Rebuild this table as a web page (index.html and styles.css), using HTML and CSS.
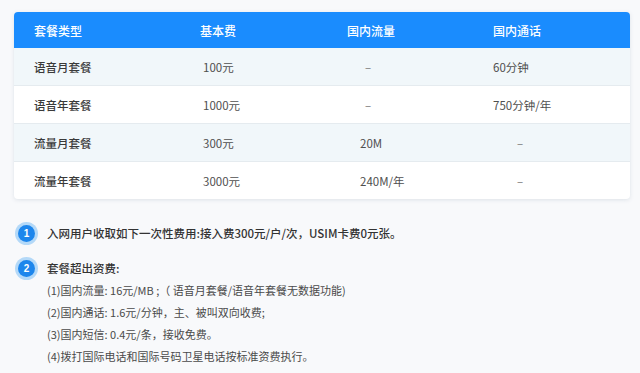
FILE: index.html
```html
<!DOCTYPE html>
<html lang="zh-CN">
<head>
<meta charset="utf-8">
<link rel="stylesheet" href="styles.css">
</head>
<body>
<div class="page">
  <div class="table">
    <div class="row head">
      <div class="cell">套餐类型</div>
      <div class="cell">基本费</div>
      <div class="cell">国内流量</div>
      <div class="cell">国内通话</div>
    </div>
    <div class="row odd">
      <div class="cell name">语音月套餐</div>
      <div class="cell c2">100元</div>
      <div class="cell c3 dash">–</div>
      <div class="cell c4">60分钟</div>
    </div>
    <div class="row">
      <div class="cell name">语音年套餐</div>
      <div class="cell c2">1000元</div>
      <div class="cell c3 dash">–</div>
      <div class="cell c4">750分钟/年</div>
    </div>
    <div class="row odd">
      <div class="cell name">流量月套餐</div>
      <div class="cell c2">300元</div>
      <div class="cell c3">20M</div>
      <div class="cell c4 dash">–</div>
    </div>
    <div class="row last">
      <div class="cell name">流量年套餐</div>
      <div class="cell c2">3000元</div>
      <div class="cell c3">240M/年</div>
      <div class="cell c4 dash">–</div>
    </div>
  </div>

  <div class="notes">
    <div class="note">
      <span class="badge">1</span>
      <div class="note-body">
        <div class="note-title">入网用户收取如下一次性费用:接入费300元/户/次，USIM卡费0元张。</div>
      </div>
    </div>
    <div class="note">
      <span class="badge">2</span>
      <div class="note-body">
        <div class="note-title">套餐超出资费:</div>
        <div class="note-line">(1)国内流量: 16元/MB ;（ 语音月套餐/语音年套餐无数据功能)</div>
        <div class="note-line">(2)国内通话: 1.6元/分钟，主、被叫双向收费;</div>
        <div class="note-line">(3)国内短信: 0.4元/条，接收免费。</div>
        <div class="note-line">(4)拨打国际电话和国际号码卫星电话按标准资费执行。</div>
      </div>
    </div>
  </div>
</div>
</body>
</html>
```

FILE: styles.css
```css
html, body {
  margin: 0;
  padding: 0;
  background: #f8f9fb;
  font-family: "Noto Sans CJK SC", "Noto Sans", sans-serif;
}

.page {
  width: 640px;
  height: 373px;
  box-sizing: border-box;
  padding: 12px 10px 0 14px;
  overflow: hidden;
}

.table {
  width: 616px;
  background: #ffffff;
  border-radius: 4px;
  box-shadow: 0 1px 4px rgba(120, 140, 160, 0.2);
  overflow: hidden;
}

.row {
  display: grid;
  grid-template-columns: 166px 147px 146px 157px;
  height: 37px;
  align-items: center;
  border-bottom: 1px solid #e5ebef;
  font-size: 11.5px;
  color: #4f4f4f;
}

.row.odd {
  background: #f1f7fa;
}

.row.last {
  border-bottom: none;
  height: 37px;
}

.row.head {
  height: 36px;
  background: #1a8cfe;
  color: #ffffff;
  font-size: 12px;
  font-weight: 500;
  border-bottom: none;
}

.cell {
  padding-left: 20px;
  white-space: nowrap;
}

.cell.name {
  color: #3a3a3a;
  font-weight: 500;
}

.cell.c2 {
  padding-left: 23px;
}

.cell.c3 {
  padding-left: 33px;
}

.cell.c4 {
  padding-left: 20px;
}

.cell.c3.dash {
  padding-left: 38px;
  color: #777;
}

.cell.c4.dash {
  padding-left: 44px;
  color: #777;
}

.notes {
  margin-top: 23px;
  display: flex;
  flex-direction: column;
  gap: 13px;
}

.note {
  display: flex;
  align-items: flex-start;
  gap: 9px;
}

.badge {
  flex: none;
  width: 17px;
  height: 17px;
  margin: 3px 3px 0 4px;
  border-radius: 50%;
  background: #1d86ec;
  box-shadow: 0 0 0 3px #b4d9f8;
  color: #ffffff;
  font-family: "Liberation Sans", "Noto Sans", sans-serif;
  font-size: 10px;
  font-weight: 700;
  line-height: 17px;
  text-align: center;
}

.note-body {
  display: flex;
  flex-direction: column;
}

.note-title {
  font-size: 11.5px;
  line-height: 22px;
  font-weight: 500;
  color: #333;
  white-space: nowrap;
}

.note-line {
  font-size: 11px;
  line-height: 22px;
  color: #4a4a4a;
  white-space: nowrap;
}
```
